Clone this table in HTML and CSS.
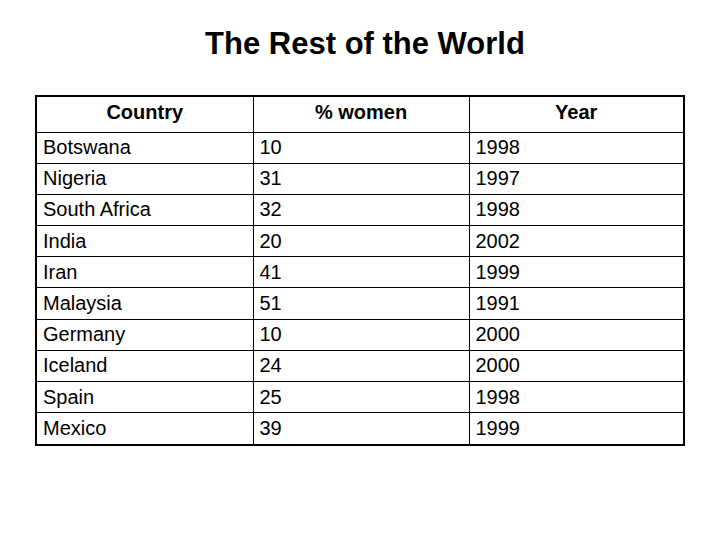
FILE: index.html
```html
<!DOCTYPE html>
<html lang="en">
<head>
<meta charset="utf-8">
<title>The Rest of the World</title>
<link rel="stylesheet" href="styles.css">
</head>
<body>
<div class="slide">
  <h1 class="title">The Rest of the World</h1>
  <div class="frame">
    <table class="data">
      <colgroup>
        <col class="c1"><col class="c2"><col class="c3">
      </colgroup>
      <thead>
        <tr class="head"><th>Country</th><th>% women</th><th>Year</th></tr>
      </thead>
      <tbody>
        <tr><td>Botswana</td><td>10</td><td>1998</td></tr>
        <tr><td>Nigeria</td><td>31</td><td>1997</td></tr>
        <tr><td>South Africa</td><td>32</td><td>1998</td></tr>
        <tr><td>India</td><td>20</td><td>2002</td></tr>
        <tr><td>Iran</td><td>41</td><td>1999</td></tr>
        <tr><td>Malaysia</td><td>51</td><td>1991</td></tr>
        <tr><td>Germany</td><td>10</td><td>2000</td></tr>
        <tr><td>Iceland</td><td>24</td><td>2000</td></tr>
        <tr><td>Spain</td><td>25</td><td>1998</td></tr>
        <tr><td>Mexico</td><td>39</td><td>1999</td></tr>
      </tbody>
    </table>
  </div>
</div>
</body>
</html>
```
FILE: styles.css
```css
html, body {
  margin: 0;
  padding: 0;
  background: #ffffff;
}
body {
  width: 720px;
  height: 540px;
  overflow: hidden;
  font-family: "Liberation Sans", Arial, sans-serif;
  color: #000000;
}
.slide {
  padding-top: 26px;
}
.title {
  margin: 0 0 33px 0;
  padding-left: 10px;
  font-size: 31px;
  line-height: 36px;
  font-weight: bold;
  text-align: center;
}
.frame {
  margin-left: 35px;
  width: 650px;
  box-sizing: border-box;
  border: 2px solid #000000;
}
.data {
  width: 100%;
  border-collapse: collapse;
  border-style: hidden;
  table-layout: fixed;
}
.c1 { width: 216px; }
.c2 { width: 216px; }
.c3 { width: 214px; }
.data th,
.data td {
  border: 1px solid #000000;
  padding: 0 0 0 6px;
  font-size: 20px;
  line-height: 23px;
  vertical-align: middle;
  text-align: left;
}
.data th {
  font-weight: bold;
  text-align: center;
  padding: 0 0 3px 0;
}
.data tr.head {
  height: 35px;
}
.data tbody tr {
  height: 31.2px;
}
```
